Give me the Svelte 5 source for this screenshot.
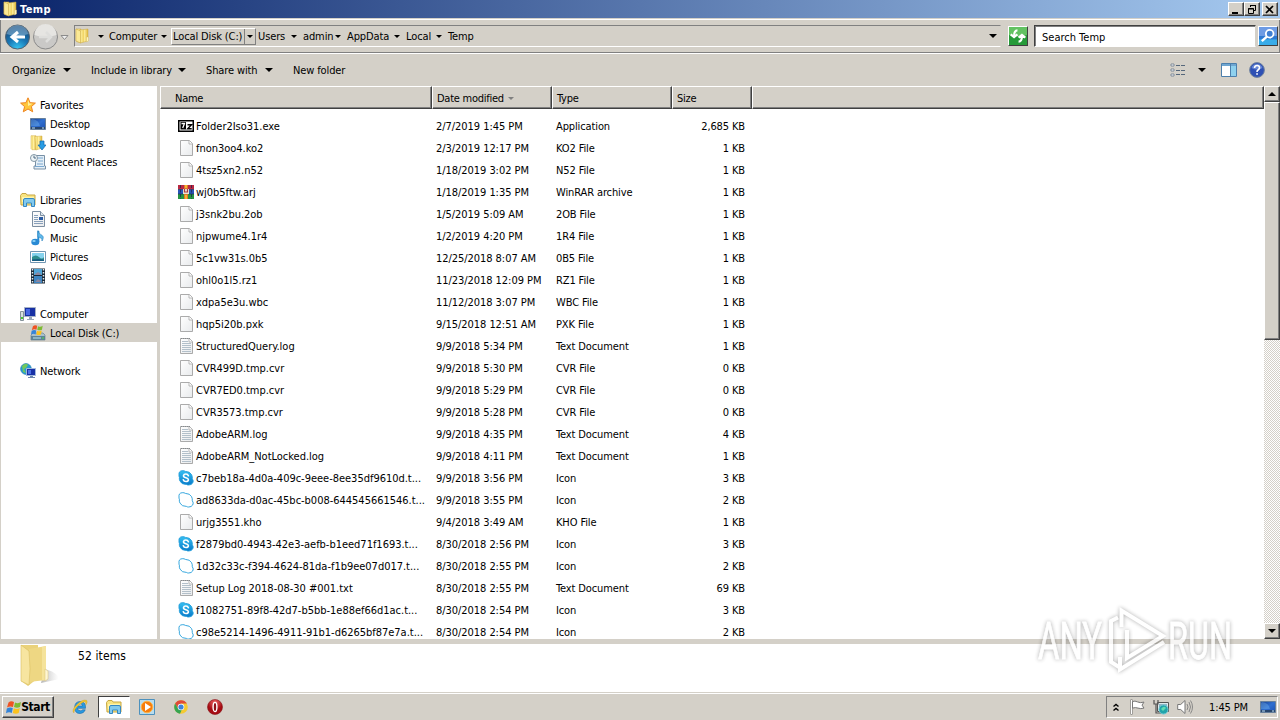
<script>
  const crumbs = ['Computer', 'Local Disk (C:)', 'Users', 'admin', 'AppData', 'Local', 'Temp'];
  const crumbWidths = [64, 85, 45, 44, 59, 42, 40];

  const groups = [
    {
      name: 'Favorites', icon: 'star', items: [
        { name: 'Desktop', icon: 'desktop' },
        { name: 'Downloads', icon: 'downloads' },
        { name: 'Recent Places', icon: 'recent' },
      ],
    },
    {
      name: 'Libraries', icon: 'library', items: [
        { name: 'Documents', icon: 'document' },
        { name: 'Music', icon: 'music' },
        { name: 'Pictures', icon: 'picture' },
        { name: 'Videos', icon: 'video' },
      ],
    },
    { name: 'Computer', icon: 'computer', items: [{ name: 'Local Disk (C:)', icon: 'disk', active: true }] },
    { name: 'Network', icon: 'network', items: [] },
  ];

  const files = [
    ['sevenzip', 'Folder2Iso31.exe', '2/7/2019 1:45 PM', 'Application', '2,685 KB'],
    ['file', 'fnon3oo4.ko2', '2/3/2019 12:17 PM', 'KO2 File', '1 KB'],
    ['file', '4tsz5xn2.n52', '1/18/2019 3:02 PM', 'N52 File', '1 KB'],
    ['rar', 'wj0b5ftw.arj', '1/18/2019 1:35 PM', 'WinRAR archive', '1 KB'],
    ['file', 'j3snk2bu.2ob', '1/5/2019 5:09 AM', '2OB File', '1 KB'],
    ['file', 'njpwume4.1r4', '1/2/2019 4:20 PM', '1R4 File', '1 KB'],
    ['file', '5c1vw31s.0b5', '12/25/2018 8:07 AM', '0B5 File', '1 KB'],
    ['file', 'ohl0o1l5.rz1', '11/23/2018 12:09 PM', 'RZ1 File', '1 KB'],
    ['file', 'xdpa5e3u.wbc', '11/12/2018 3:07 PM', 'WBC File', '1 KB'],
    ['file', 'hqp5i20b.pxk', '9/15/2018 12:51 AM', 'PXK File', '1 KB'],
    ['text', 'StructuredQuery.log', '9/9/2018 5:34 PM', 'Text Document', '1 KB'],
    ['file', 'CVR499D.tmp.cvr', '9/9/2018 5:30 PM', 'CVR File', '0 KB'],
    ['file', 'CVR7ED0.tmp.cvr', '9/9/2018 5:29 PM', 'CVR File', '0 KB'],
    ['file', 'CVR3573.tmp.cvr', '9/9/2018 5:28 PM', 'CVR File', '0 KB'],
    ['text', 'AdobeARM.log', '9/9/2018 4:35 PM', 'Text Document', '4 KB'],
    ['text', 'AdobeARM_NotLocked.log', '9/9/2018 4:11 PM', 'Text Document', '1 KB'],
    ['skype', 'c7beb18a-4d0a-409c-9eee-8ee35df9610d.t...', '9/9/2018 3:56 PM', 'Icon', '3 KB'],
    ['cloud', 'ad8633da-d0ac-45bc-b008-644545661546.t...', '9/9/2018 3:55 PM', 'Icon', '2 KB'],
    ['file', 'urjg3551.kho', '9/4/2018 3:49 AM', 'KHO File', '1 KB'],
    ['skype', 'f2879bd0-4943-42e3-aefb-b1eed71f1693.t...', '8/30/2018 2:56 PM', 'Icon', '3 KB'],
    ['cloud', '1d32c33c-f394-4624-81da-f1b9ee07d017.t...', '8/30/2018 2:55 PM', 'Icon', '2 KB'],
    ['text', 'Setup Log 2018-08-30 #001.txt', '8/30/2018 2:55 PM', 'Text Document', '69 KB'],
    ['skype', 'f1082751-89f8-42d7-b5bb-1e88ef66d1ac.t...', '8/30/2018 2:54 PM', 'Icon', '3 KB'],
    ['cloud', 'c98e5214-1496-4911-91b1-d6265bf87e7a.t...', '8/30/2018 2:54 PM', 'Icon', '2 KB'],
  ];
</script>

<svelte:head><title>Temp</title></svelte:head>

<!-- shared gradients -->
<svg class="defs" width="0" height="0">
  <defs>
    <linearGradient id="gold"><stop offset="0" stop-color="#fff3a6" /><stop offset=".45" stop-color="#f1d566" /><stop offset=".5" stop-color="#fff0a0" /><stop offset="1" stop-color="#e0b93d" /></linearGradient>
    <linearGradient id="screen" x2="1" y2="1"><stop offset="0" stop-color="#173c8e" /><stop offset=".5" stop-color="#2f6fd0" /><stop offset="1" stop-color="#1c4fb0" /></linearGradient>
    <linearGradient id="page" x2="1" y2="1"><stop offset="0" stop-color="#fff" /><stop offset="1" stop-color="#e8eaec" /></linearGradient>
    <linearGradient id="sky" x2="0" y2="1"><stop offset="0" stop-color="#35c0f2" /><stop offset="1" stop-color="#0878c8" /></linearGradient>
    <radialGradient id="back" cx=".5" cy="1" r=".9"><stop offset="0" stop-color="#37c9f5" /><stop offset=".5" stop-color="#1977b5" /><stop offset="1" stop-color="#174b7c" /></radialGradient>
    <radialGradient id="red" cx=".5" cy=".2"><stop offset="0" stop-color="#ee6666" /><stop offset="1" stop-color="#a60c13" /></radialGradient>
  </defs>
</svg>

{#snippet flag()}
  <path d="M2.5 3.5Q5 1.5 8 3L7 8Q4 6.7 1 8.5Z" fill="#ef5323" />
  <path d="M9 3.5Q12 5 15 3L14 8Q11 9.5 8 8Z" fill="#7dbb32" />
  <path d="M.8 9.4Q4 7.6 6.8 9L5.8 14Q3 12.5 0 14.2Z" fill="#3484d8" />
  <path d="M7.8 9.3Q11 10.8 13.8 9L12.7 14Q10 15.6 6.8 14Z" fill="#fbc21d" />
{/snippet}

{#snippet icon(name, size = 16)}
  <svg class="icon" width={size} height={size} viewBox="0 0 16 16">
    {#if name === 'folder'}
      <path d="M2 1h5v13.5L4 14l-2-1Z" fill="url(#gold)" stroke="#c9a640" stroke-width=".5" />
      <path d="M6 2 14 1v12l-8 2Z" fill="url(#gold)" stroke="#c9a640" stroke-width=".5" />
      <path d="M2 1 6.5 3v12L2 13Z" fill="#fbe995" stroke="#c9a640" stroke-width=".5" />
      <path d="M12.5 9h2v4l-2 1Z" fill="#fff5bd" stroke="#ccb66b" stroke-width=".4" />
    {:else if name === 'star'}
      <path d="m8 .8 2.1 4.9 5.3.4-4 3.5 1.3 5.2L8 12l-4.7 2.8 1.3-5.2-4-3.5 5.3-.4Z" fill="#ffc63b" stroke="#ee8420" />
      <path d="m8 3 1.4 3.5 3.2.3L8 9Z" fill="#fff2a0" />
    {:else if name === 'desktop'}
      <path d="M.5 2.5h15v11H.5Z" fill="url(#screen)" stroke="#667f9b" />
      <path d="M1 11h14v2H1Z" fill="#28466d" /><path d="M2 3q7 1 8 7H1V4" fill="#7dc0f3" opacity=".35" /><path d="M2 12h3m7 0h2" stroke="#bfe1fa" />
    {:else if name === 'downloads'}
      <path d="M1 .7h5v14H2l-1-1Z" fill="url(#gold)" stroke="#d2af48" stroke-width=".5" />
      <path d="M5 1.5 12 1v12l-6 2Z" fill="url(#gold)" stroke="#d2af48" stroke-width=".5" />
      <path d="M10 6h4v4h2l-4 5-4-5h2Z" fill="#279ce4" stroke="#1265ae" stroke-width=".7" />
    {:else if name === 'recent'}
      <path d="M5.5 1.5h9V12h1v3H4v-3h1.5Z" fill="#e4eef6" stroke="#7890a6" />
      <path d="M8 4h5M8 7h5M7 10h6M5 12.5h9" stroke="#7aa8d0" /><circle cx="4" cy="4" r="3.5" fill="#edf4f7" stroke="#8397a5" /><path d="M4 1.7V4h2" fill="none" stroke="#4b677e" />
    {:else if name === 'library'}
      <path d="M.5 3.5 2 1.5h4L7 3h8v10H1Z" fill="#f8e481" stroke="#c8a743" />
      <path d="M2 5h12v5H2Z" fill="#fff4ac" /><path d="M3.5 8q0-1.5 1.5-1.5h8q1.5 0 1.5 1.5v6.5h-3V11h-5v3.5h-3Z" fill="#81c9ee" stroke="#3487c1" />
    {:else if name === 'document'}
      <path d="M2.5.5h8l4 4v11h-12Z" fill="url(#page)" stroke="#7c8ea1" /><path d="M10.5.5v4h4" fill="#dce6ee" stroke="#7c8ea1" />
      <path d="M4 4.5h4M4 6.5h4M4 8.5h4M4 10.5h9M4 12.5h9" stroke="#88a0bb" /><path d="M9 6h4v3H9Z" fill="#2a5ba3" />
    {:else if name === 'music'}
      <path d="M8.3 1v11" stroke="#2a8ed0" stroke-width="2" /><path d="M8 .5q.6 3.5 4 4.8Q14.5 7 12 11q.3-3.5-4-4Z" fill="#60b9eb" stroke="#277fbd" stroke-width=".6" />
      <ellipse cx="5.3" cy="12" rx="4" ry="3.3" fill="#298ad4" /><ellipse cx="4" cy="11" rx="1.7" ry="1" fill="#8ed3f7" />
    {:else if name === 'picture'}
      <path d="M.5 2.5h15v11H.5Z" fill="#fff" stroke="#7196b2" /><path d="M2 4h12v8H2Z" fill="#85d2ed" /><path d="M2 8q4-3 7 0t5 0v4H2Z" fill="#2e8e8e" /><path d="M2 10.5q6-1 12 0V12H2Z" fill="#165e82" />
    {:else if name === 'video'}
      <path d="M1 .5h14v15H1Z" fill="#1a2836" /><path d="M4 1h8v6H4Z" fill="#50a6d8" /><path d="M4 8h8v7H4Z" fill="#3d85c1" /><path d="m5 6 3-2 3 2v1H5Zm0 8 3-3 3 2v1H5Z" fill="#8a87a0" /><path d="M2.5 1v14m11-14v14" stroke="#e6edf0" stroke-width="1.5" stroke-dasharray="1.5 1.5" />
    {:else if name === 'computer'}
      <path d="M.5 5.5h3v9h-3Z" fill="#d8e1df" stroke="#86939a" /><path d="M1 12h2" stroke="#4ac437" stroke-width="2" /><path d="M4.5 1.5h11v9h-11Z" fill="#1730a4" stroke="#a6b2c6" /><path d="M6 3h4v6H6Z" fill="#4668e4" /><path d="M9 11h3v2h2v1H7v-1h2Z" fill="#98a6ba" />
    {:else if name === 'disk'}
      <path d="m2 9 1-1h10l2 2v5H1v-5Z" fill="#a9bfcb" stroke="#688291" stroke-width=".7" /><path d="M1 11h14v4H1Z" fill="#5d8296" /><path d="M3 13h8" stroke="#bce5ef" /><path d="M12 13h2" stroke="#56dc45" />
      <g transform="translate(1 -1.5) scale(.78)">{@render flag()}</g>
    {:else if name === 'network'}
      <circle cx="6" cy="6" r="5.4" fill="#269bd4" stroke="#2880b1" stroke-width=".7" /><path d="M2 3q4-4 6-1L6 5 4 6l2 4-3-1Z" fill="#70c85b" /><path d="M6.5 5.5h9v7h-9Z" fill="#1831a7" stroke="#a2b9dc" /><path d="M8 7h3v4H8Z" fill="#4c6fe6" /><path d="M10 13h3v1h2v1H8v-1h2Z" fill="#6d87ad" />
    {:else if name === 'file' || name === 'text'}
      <path d="M2.5.5h9l3 3v12h-12Z" fill="url(#page)" stroke="#a2a2a2" stroke-width=".9" /><path d="M11 .5v3.5h3.5" fill="#fff" stroke="#a8a8a8" stroke-width=".8" />
      {#if name === 'text'}<path d="M4 3.5h6M4 5.5h9M4 7.5h9M4 9.5h9M4 11.5h9M4 13.5h9" stroke="#b3c0ca" /><path d="M3 .5h9" stroke="#84898d" stroke-dasharray="1 1" />{/if}
    {:else if name === 'sevenzip'}
      <path d="M.75 2.75h14.5v10.5H.75Z" fill="#fff" stroke="#000" stroke-width="1.5" /><path d="M2.5 4h5.5v7.5H2.5Z" /><path d="M3.5 5.5h3L4.7 10" fill="none" stroke="#fff" stroke-width="1.3" /><path d="M9.5 6.7h4L9.7 10.8h4" fill="none" stroke="#000" stroke-width="1.4" />
    {:else if name === 'rar'}
      <path d="M0 1h16v4.5H0Z" fill="#b92842" /><path d="M0 5.5h16V10H0Z" fill="#2855b8" /><path d="M0 10h16v5H0Z" fill="#259342" /><path d="M6 1h4v14H6Z" fill="#dd762b" /><path d="M5 5h6v5H5Z" fill="#e9e6d8" /><path d="M6.5 5v3h3V5" fill="none" stroke="#ad3841" stroke-width="1.2" /><path d="M2.5 1v14m11-14v14" stroke="#18234b" stroke-width=".7" stroke-dasharray="3 1.5" /><path d="M0 5.5h5m6 0h5M0 10h5m6 0h5" stroke="#18234b" stroke-width=".6" /><path d="M7 1h2v3H7Zm0 10h2v4H7Z" fill="#f4b52f" />
    {:else if name === 'skype' || name === 'cloud'}
      <path d="M1 5Q.5 1 4.2.7q2-.2 3.2.7 4.5 0 6.2 3.3.9 1.9.7 4Q16 11 14.7 13t-4 2q-1 .2-2.3-.6Q4 14.6 2 11.2 1 9.3 1.4 7.2Q.8 6.3 1 5Z" fill={name === 'skype' ? 'url(#sky)' : '#fff'} stroke="#209dda" stroke-width=".9" />
      {#if name === 'skype'}<path d="M10.4 5.7Q9.8 4 7.8 4T5.5 5.7q0 1.5 2.4 2t2.5 2.1Q10.2 11.5 8 11.5t-2.7-1.8" fill="none" stroke="#fff" stroke-width="1.6" stroke-linecap="round" />{/if}
    {:else if name === 'flag'}
      {@render flag()}
    {:else if name === 'ie'}
      <path d="M13.5 9.3H5.4q.3 2.5 2.9 2.5 1.6 0 2.4-1h2.6Q12 14.5 8 14.5q-5.3 0-5.3-6T8.3 2.5Q14 2.7 13.5 9.3ZM5.6 7h5Q10.3 4.8 8.2 4.8 6.1 4.8 5.6 7Z" fill="#289be2" stroke="#1467aa" stroke-width=".6" /><path d="M2 14Q-1 11.5 4.6 5.8T14.5 1.2q1.8 1.5-.8 5 .8-3.7-1.2-3.5Q9 3.7 4.7 8.2 1.2 12.4 2 14Z" fill="#f4c630" stroke="#b9931f" stroke-width=".3" />
    {:else if name === 'player'}
      <path d="M.5.5h15v15H.5Z" fill="#b9dced" stroke="#4d91bd" /><circle cx="8" cy="8" r="5.8" fill="#f77d0b" stroke="#ffb347" /><path d="m6 4 6 4-6 4Z" fill="#fff" />
    {:else if name === 'chrome'}
      <circle cx="8" cy="8" r="6.8" fill="#f4ca32" /><path d="M2.1 4.6a6.8 6.8 0 0 1 11.8 0H8L5 9.5Z" fill="#df4939" /><path d="M2.1 4.6 5.2 9.8 8.7 11 7 14.7A6.8 6.8 0 0 1 2.1 4.6Z" fill="#36a452" /><circle cx="8" cy="8" r="3.3" fill="#fff" /><circle cx="8" cy="8" r="2.6" fill="#3d83db" />
    {:else if name === 'opera'}
      <circle cx="8" cy="8" r="7.5" fill="url(#red)" stroke="#871217" stroke-width=".6" /><ellipse cx="8" cy="8" rx="1.9" ry="4.6" fill="#8f1016" stroke="#fff" stroke-width="1.4" />
    {:else if name === 'action'}
      <path d="M2.5.5v15" stroke="#6b6b6b" stroke-width="2" /><path d="M2.5 1v14" stroke="#fff" /><path d="M3.5 2.5q2.5-1 5 .4t6.5.2l-2 3 2 3q-3.5 1-6 0t-5.5 0Z" fill="#fff" stroke="#777" />
    {:else if name === 'traynet'}
      <path d="M4.5 3.5h11v9h-11Z" fill="#dce9ec" stroke="#555" /><path d="M6 5h8v6H6Z" fill="#8fb4c4" /><path d="M1 1v4h4V1M3 5v9h5" fill="none" stroke="#555" stroke-width="1.2" /><circle cx="10.5" cy="10.5" r="4.5" fill="#21a4ab" stroke="#6ac7d2" /><path d="M8 10q3-4 5-1l-3 3Z" fill="#63dcaf" />
    {:else if name === 'sound'}
      <path d="M.7 5.5h3L8 1.5v13l-4.3-4h-3Z" fill="#fff" stroke="#777" /><path d="M10 5q2 3 0 6M12 3q3 5 0 10M13.5 1.5q4 6.5 0 13" fill="none" stroke="#888" />
    {:else if name === 'go'}
      <path d="M0 0h16v16H0Z" fill="#269a38" /><path d="M0 0h16v7Q8 10 0 7Z" fill="#78cf70" opacity=".75" /><path d="M7.5 3Q4.5 3 4.5 8M1.5 6.5 4.5 9l3-2.5M8.5 13q3 0 3-5M8.5 9.5l3-2.5 3 2.5" fill="none" stroke="#fff" stroke-width="1.9" />
    {:else if name === 'search'}
      <path d="M0 0h16v16H0Z" fill="#2e79d2" /><path d="M0 0h16v8H0Z" fill="#6e9be4" /><path d="M0 11h16v5H0Z" fill="#39ace8" /><circle cx="9.5" cy="6" r="3.4" fill="#407ed2" stroke="#fff" stroke-width="1.6" /><path d="m7 8.5-4.5 4" stroke="#fff" stroke-width="2.2" />
    {:else if name === 'view'}
      <path d="M1 2h3v2H1Zm0 5h3v2H1Zm0 5h3v2H1Z" fill="#fff" stroke="#758292" stroke-width=".9" /><path d="M6 3.5h4m1 0h4M6 8.5h4m1 0h4M6 12.5h4m1 0h4" stroke="#55677b" />
    {:else if name === 'pane'}
      <path d="M.5 1.5h15v13H.5Z" fill="#fff" stroke="#4c7fac" /><path d="M1 3h14" stroke="#6fa6d1" stroke-width="2" /><path d="M10 4h5v10h-5Z" fill="#8ed1ef" /><path d="M9.5 2v12" stroke="#4c7fac" />
    {:else if name === 'help'}
      <circle cx="8" cy="8" r="7.4" fill="#2e50b4" stroke="#71839f" /><path d="M2.5 6a5.8 5.8 0 0 1 11 0Q8 9 2.5 6Z" fill="#7d9be2" opacity=".7" /><path d="M5.5 6q.2-2.5 2.6-2.5T10.5 6Q10.3 7 9 8 8 8.6 8 10" fill="none" stroke="#fff" stroke-width="1.6" /><path d="M7.2 11.2h1.7v1.6H7.2Z" fill="#fff" />
    {/if}
  </svg>
{/snippet}

<div class="window">
  <header class="titlebar">
    {@render icon('folder')}
    <b>Temp</b>
    <div class="win-buttons">
      <button aria-label="Minimize"><svg width="14" height="11"><path d="M3 9h6" stroke="#000" stroke-width="2" /></svg></button>
      <button aria-label="Restore"><svg width="14" height="11"><path d="M5.5 3V1.5h5v5H9M5 1.5h6" fill="none" stroke="#000" /><path d="M3.5 4.5h5v5h-5ZM3 5h6" fill="none" stroke="#000" /></svg></button>
      <button class="close" aria-label="Close"><svg width="14" height="11"><path d="m3 2 7 7m0-7-7 7" stroke="#000" stroke-width="1.7" /></svg></button>
    </div>
  </header>

  <nav class="navbar">
    <svg class="travel" width="70" height="30">
      <circle cx="17.5" cy="15" r="12" fill="url(#back)" stroke="#53626f" />
      <path d="M6.5 12A11.2 11.2 0 0 1 28.5 12Q17 16 6.5 12Z" fill="#a0c5df" opacity=".48" />
      <path d="M25 15H12m6-5-6 5 6 5" fill="none" stroke="#fff" stroke-width="3" />
      <circle cx="45.5" cy="15" r="12" fill="#cac9c7" stroke="#8a8a8a" />
      <path d="M34.5 13A11 11 0 0 1 56.5 13Q45 17 34.5 13Z" fill="#e6e5e2" />
      <path d="M39 15h12m-5-5 5 5-5 5" fill="none" stroke="#dededc" stroke-width="2.5" />
      <path d="M61 13.5h7l-3.5 4Z" fill="#eee" stroke="#8b8b8b" />
    </svg>
    <div class="address">
      <span class="address-icon">{@render icon('folder')}</span>
      <i class="arrow small first"></i>
      {#each crumbs as crumb, i}
        <span class="crumb" class:pressed={i === 1} style:width="{crumbWidths[i]}px">
          <span>{crumb}</span>{#if i < crumbs.length - 1}<i class="arrow small"></i>{/if}
        </span>
      {/each}
      <i class="arrow end"></i>
    </div>
    <button class="go" aria-label="Refresh">{@render icon('go', 18)}</button>
    <div class="search">Search Temp</div>
    <button class="find" aria-label="Search">{@render icon('search', 18)}</button>
  </nav>

  <div class="toolbar">
    <span class="tool organize">Organize <i class="arrow"></i></span>
    <span class="tool include">Include in library <i class="arrow"></i></span>
    <span class="tool share">Share with <i class="arrow"></i></span>
    <span class="tool">New folder</span>
    <div class="view-tools">
      {@render icon('view')}<i class="arrow"></i><span class="pane">{@render icon('pane')}</span>{@render icon('help')}
    </div>
  </div>

  <main class="content">
    <aside>
      {#each groups as group}
        <section>
          <div class="tree-row">{@render icon(group.icon)}<span>{group.name}</span></div>
          {#each group.items as item}
            <div class="tree-row child" class:active={item.active}>{@render icon(item.icon)}<span>{item.name}</span></div>
          {/each}
        </section>
      {/each}
    </aside>
    <div class="listing">
      <div class="columns head">
        <span>Name</span><span>Date modified <i class="arrow small gray"></i></span><span>Type</span><span>Size</span><span></span>
      </div>
      <div class="rows">
        {#each files as [kind, name, date, type, size]}
          <div class="columns file-row">
            <span class="name">{@render icon(kind)}<span>{name}</span></span>
            <span class="date">{date}</span><span>{type}</span><span class="size">{size}</span>
          </div>
        {/each}
      </div>
    </div>
    <div class="scrollbar">
      <button aria-label="Scroll up"><i class="arrow up"></i></button>
      <div class="thumb"></div>
      <button class="down" aria-label="Scroll down"><i class="arrow"></i></button>
    </div>
  </main>

  <footer class="details">
    <svg width="40" height="44">
      <defs><linearGradient id="shade"><stop offset="0" stop-color="#777" stop-opacity=".55" /><stop offset="1" stop-color="#aaa" stop-opacity="0" /></linearGradient></defs>
      <path d="M25 25q8 2 12 6t-2 5l-14 3Z" fill="url(#shade)" />
      <path d="M1 1h17v33L8 42l-7-5Z" fill="#ead27b" /><path d="m9 5 17-3v34L9 38Z" fill="#eed783" /><path d="m22 3 4-1v34l-4 .5Z" fill="#f5e39b" />
      <path d="m1 1 8 6q2 18 0 34l-8-4Z" fill="#f7e5a0" stroke="#d9bd60" stroke-width=".6" /><path d="m25 25 3 2v8l-3 2Z" fill="#fff7d3" stroke="#d9c278" stroke-width=".5" />
    </svg>
    <span>52 items</span>
  </footer>

  <footer class="taskbar">
    <button class="start">{@render icon('flag', 16)}<b>Start</b></button>
    <span class="task">{@render icon('ie')}</span>
    <span class="task open">{@render icon('library')}</span>
    <span class="task">{@render icon('player')}</span>
    <span class="task">{@render icon('chrome')}</span>
    <span class="task">{@render icon('opera')}</span>
    <div class="tray">
      <svg class="chevrons" width="6" height="9"><path d="m.5 3.5 2.5-2 2.5 2m-5 4 2.5-2 2.5 2" fill="none" stroke="#000" stroke-width="1.4" /></svg>
      {@render icon('action')}{@render icon('traynet')}{@render icon('sound')}
      <span class="clock">1:45 PM</span>
      {@render icon('desktop')}
    </div>
  </footer>

  <svg class="watermark" width="210" height="76">
    <g class="mark">
      <text x="8" y="56" textLength="64" lengthAdjust="spacingAndGlyphs">ANY</text>
      <path d="M88 14.5 81 18v41l8 5" />
      <path d="M91.5 24V7.5L133 33 97 55V27" />
      <path d="M90 54v12.5L134 39" />
      <text x="138" y="56" textLength="64" lengthAdjust="spacingAndGlyphs">RUN</text>
    </g>
  </svg>
</div>

<style>
  :global(body) {
    overflow: hidden;
  }
  .window {
    position: relative;
    display: flex;
    flex-direction: column;
    width: 1280px;
    height: 720px;
    overflow: hidden;
    background: #d4d0c8;
    color: #000;
    font: 11px/15px "DejaVu Sans Condensed", "DejaVu Sans", sans-serif;
    letter-spacing: -0.12px;
  }
  .defs {
    position: absolute;
  }
  svg {
    display: block;
    flex: none;
  }
  button {
    display: flex;
    align-items: center;
    justify-content: center;
    padding: 0;
    color: inherit;
    font: inherit;
    letter-spacing: inherit;
    background: #d4d0c8;
    border: 1px solid;
    border-color: #fff #404040 #404040 #fff;
    box-shadow: inset -1px -1px #808080;
  }
  .titlebar {
    display: flex;
    align-items: center;
    flex: none;
    height: 18px;
    padding: 0 2px;
    color: #fff;
    background: linear-gradient(90deg, #0a246a, #a6caf0);
  }
  .titlebar b {
    margin-left: 2px;
    letter-spacing: 0.4px;
  }
  .win-buttons {
    display: flex;
    margin-left: auto;
  }
  .win-buttons button {
    width: 16px;
    height: 14px;
  }
  .win-buttons .close {
    margin-left: 2px;
  }
  .navbar {
    display: flex;
    align-items: center;
    flex: none;
    height: 36px;
    box-sizing: border-box;
    border-top: 1px solid #d4d0c8;
    border-bottom: 1px solid #fff;
    box-shadow: inset 0 1px #fff, inset 1px 0 #808080, inset -1px 0 #808080, inset 0 -1px #808080;
  }
  .travel {
    margin: 2px 4px 0 0;
  }
  .address {
    display: flex;
    align-items: center;
    width: 927px;
    height: 22px;
    box-sizing: border-box;
    border: 1px solid;
    border-color: #808080 #d4d0c8 #fff #808080;
  }
  .address-icon {
    width: 24px;
    margin-left: -1px;
  }
  .crumb {
    display: flex;
    align-items: center;
    justify-content: space-between;
    box-sizing: border-box;
    height: 17px;
    padding: 0 4px 0 2px;
    white-space: nowrap;
  }
  .pressed {
    position: relative;
    border: 1px solid;
    border-color: #fff #808080 #808080 #fff;
    padding: 0 2px 0 1px;
  }
  .pressed::after {
    position: absolute;
    right: 10px;
    top: 0;
    height: 15px;
    border-left: 1px solid #808080;
    content: '';
  }
  .arrow {
    display: inline-block;
    width: 0;
    height: 0;
    flex: none;
    border: 4px solid transparent;
    border-top-color: #000;
    border-bottom: 0;
  }
  .arrow.small {
    border-width: 3px 3px 0;
  }
  .arrow.gray {
    margin: 0 0 2px 1px;
    border-top-color: #808080;
  }
  .arrow.up {
    border-top: 0;
    border-bottom: 4px solid #000;
  }
  .first {
    margin: 0 3px 0 0;
  }
  .end {
    margin: 0 3px 0 auto;
  }
  .go {
    width: 20px;
    height: 20px;
    margin-left: 7px;
  }
  .search {
    width: 222px;
    height: 22px;
    box-sizing: border-box;
    margin: 0 2px 0 6px;
    padding: 4px 7px 2px;
    letter-spacing: 0;
    background: #fff;
    border: 1px solid;
    border-color: #404040 #d4d0c8 #fff #404040;
    box-shadow: inset 1px 1px #808080;
  }
  .find {
    width: 20px;
    height: 20px;
  }
  .toolbar {
    display: flex;
    align-items: center;
    flex: none;
    height: 32px;
    padding: 0 15px 0 12px;
  }
  .tool {
    display: flex;
    align-items: center;
    justify-content: space-between;
  }
  .organize {
    width: 59px;
    margin-right: 20px;
  }
  .include {
    width: 95px;
    margin-right: 20px;
  }
  .share {
    width: 67px;
    margin-right: 20px;
  }
  .view-tools {
    display: flex;
    align-items: center;
    margin-left: auto;
  }
  .view-tools .arrow {
    margin: 0 15px 0 12px;
  }
  .pane {
    margin-right: 12px;
  }
  .content {
    display: grid;
    grid-template-columns: 160px 1104px 16px;
    flex: none;
    height: 553px;
    background: #fff;
  }
  aside {
    box-sizing: border-box;
    padding-top: 9px;
    border-right: 3px solid #d4d0c8;
    border-left: 1px solid #d4d0c8;
  }
  section {
    margin-bottom: 19px;
  }
  .tree-row {
    display: flex;
    align-items: center;
    height: 19px;
    padding-left: 19px;
    gap: 4px;
  }
  .tree-row span {
    padding-top: 2px;
  }
  .child {
    padding-left: 29px;
  }
  .active {
    background: #d4d0c8;
  }
  .listing {
    min-width: 0;
    overflow: hidden;
  }
  .columns {
    display: grid;
    grid-template-columns: 272px 120px 120px 80px 1fr;
  }
  .head {
    height: 23px;
    background: #d4d0c8;
    letter-spacing: -0.25px;
  }
  .head span {
    padding: 4px 0 1px 4px;
    border: 1px solid;
    border-color: #fff #404040 #404040 #fff;
    box-shadow: inset -1px -1px #808080;
    white-space: nowrap;
  }
  .head span:first-child {
    padding-left: 14px;
  }
  .rows {
    padding-top: 6px;
  }
  .file-row {
    height: 22px;
    align-items: center;
    white-space: nowrap;
  }
  .file-row > span {
    padding-left: 4px;
  }
  .file-row .name {
    display: flex;
    align-items: center;
    gap: 2px;
    padding-left: 18px;
    letter-spacing: -0.02px;
  }
  .name :global(.icon) {
    margin-top: -1px;
  }
  .file-row .date {
    letter-spacing: -0.05px;
  }
  .file-row .size {
    padding-right: 7px;
    text-align: right;
  }
  .scrollbar {
    display: flex;
    flex-direction: column;
    background: repeating-conic-gradient(#fff 0 25%, #d4d0c8 0 50%) 0 0 / 2px 2px;
  }
  .scrollbar button {
    width: 16px;
    height: 16px;
  }
  .thumb {
    height: 238px;
    box-sizing: border-box;
    background: #d4d0c8;
    border: 1px solid;
    border-color: #fff #404040 #404040 #fff;
    box-shadow: inset -1px -1px #808080;
  }
  .scrollbar .down {
    margin-top: auto;
  }
  .details {
    display: flex;
    flex: none;
    height: 48px;
    box-sizing: border-box;
    margin-top: 5px;
    padding-left: 20px;
    background: #fff;
  }
  .details span {
    margin: 5px 0 0 18px;
    font-size: 12px;
    letter-spacing: 0.1px;
  }
  .taskbar {
    display: flex;
    align-items: center;
    flex: none;
    height: 27px;
    margin-top: 1px;
    box-sizing: border-box;
    border-top: 1px solid #fff;
  }
  .start {
    width: 52px;
    height: 22px;
    margin: 0 10px 0 2px;
  }
  .start b {
    margin-left: -1px;
    font-size: 12px;
    letter-spacing: -0.4px;
  }
  .task {
    display: flex;
    align-items: center;
    justify-content: center;
    width: 32px;
    height: 22px;
    margin-right: 1.7px;
    box-sizing: border-box;
  }
  .open {
    background: #fff;
    border: 1px solid;
    border-color: #404040 #fff #fff #404040;
  }
  .tray {
    display: flex;
    align-items: center;
    width: 172px;
    height: 22px;
    box-sizing: border-box;
    margin: 0 2px 0 auto;
    padding-left: 6px;
    gap: 8px;
    border: 1px solid;
    border-color: #808080 #fff #fff #808080;
  }
  .chevrons {
    margin-right: 2px;
  }
  .clock {
    margin: 0 4px 0 8px;
    white-space: nowrap;
  }
  .watermark {
    position: absolute;
    top: 603px;
    left: 1030px;
    pointer-events: none;
  }
  .mark {
    fill: #fff;
    stroke: #fff;
    stroke-width: 0.8;
    opacity: 0.8;
    filter: drop-shadow(0 0 2px rgba(0, 0, 0, 0.4));
    font: 51px/1 Roboto, sans-serif;
    letter-spacing: 0;
  }
  .mark path {
    fill: none;
    stroke-width: 4;
  }
</style>
